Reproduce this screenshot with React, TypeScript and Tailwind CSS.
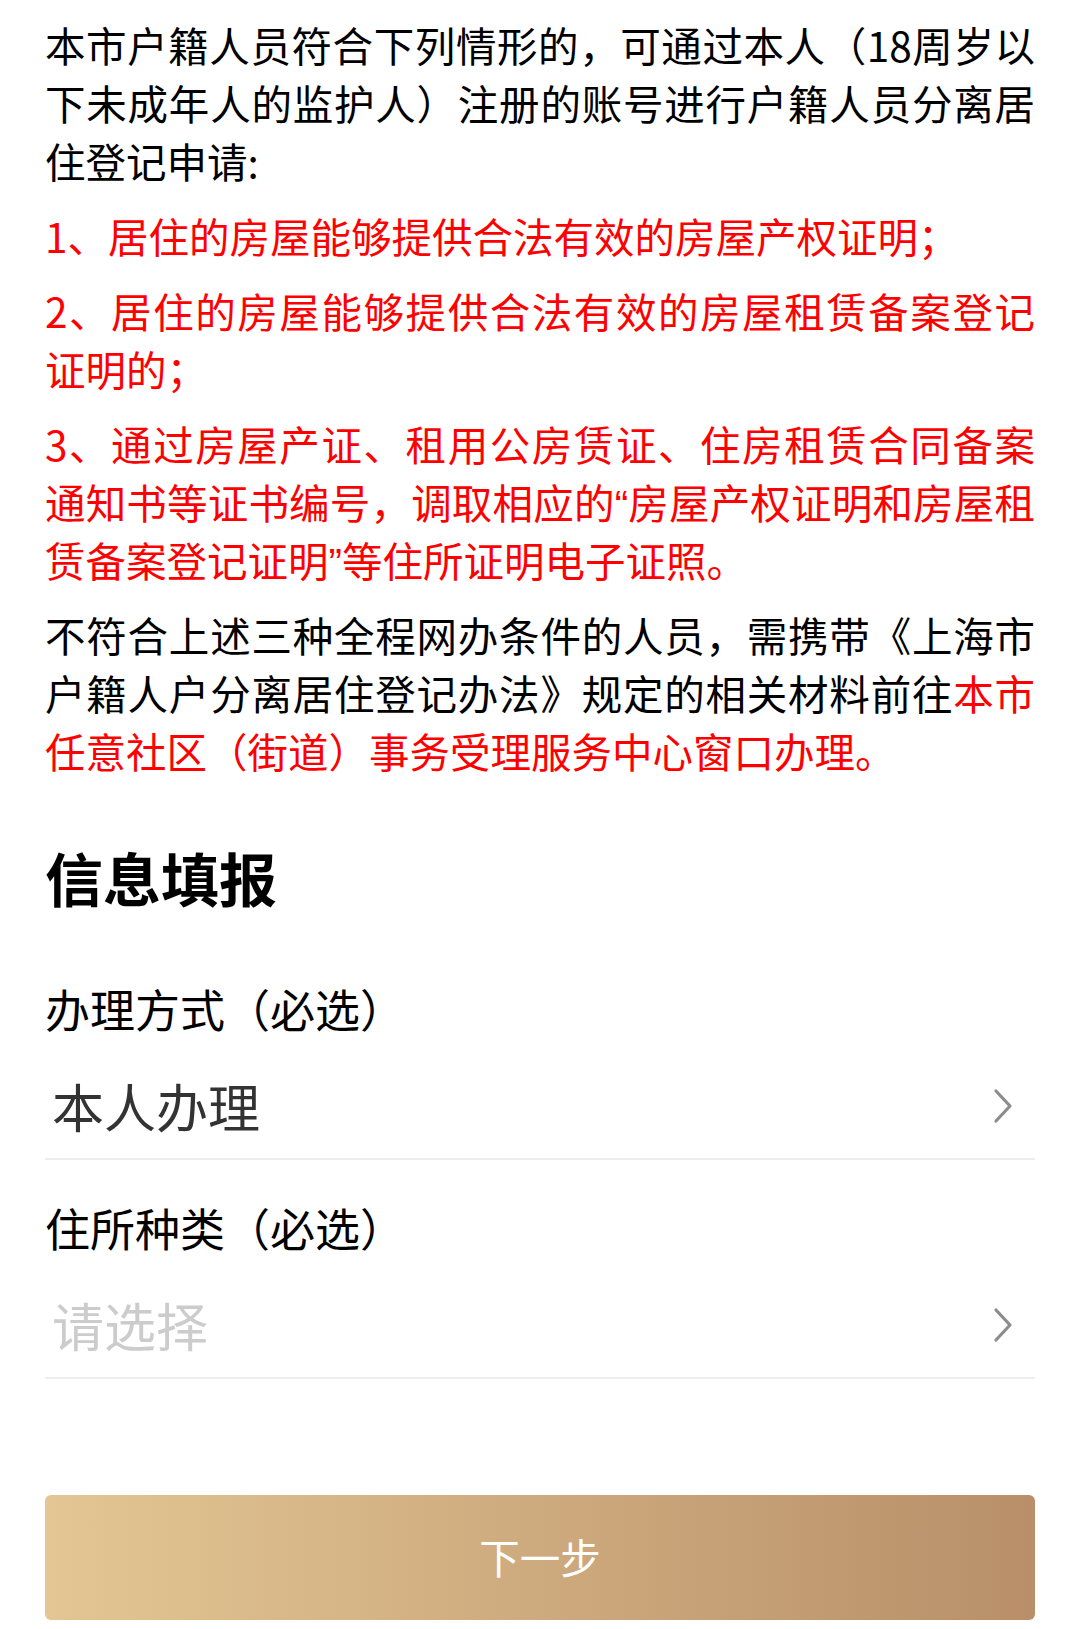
import React from "react";

const font = { fontFamily: '"Noto Sans CJK SC", "Noto Sans", sans-serif' };

function Chevron() {
  return (
    <svg width="20" height="36" viewBox="0 0 20 36" fill="none" className="shrink-0">
      <path
        d="M3 3 L17 18 L3 33"
        stroke="#8c8c8c"
        strokeWidth="3.2"
        strokeLinecap="round"
        strokeLinejoin="round"
      />
    </svg>
  );
}

function SelectRow({ value, placeholder }: { value?: string; placeholder: string }) {
  return (
    <div className="flex h-[120px] items-center justify-between border-b-2 border-[#eeeeee] pt-[14px]">
      <span
        className={`pl-[7px] text-[52px] leading-[72px] ${value ? "text-[#333333]" : "text-[#cccccc]"}`}
      >
        {value ?? placeholder}
      </span>
      <div className="mr-[22px]">
        <Chevron />
      </div>
    </div>
  );
}

// 窄引号，和原图一样不占全角
const Q = ({ children }: { children: string }) => (
  <span className="font-['Liberation_Sans',sans-serif] leading-none">{children}</span>
);

export default function App() {
  return (
    <div className="min-h-[1629px] w-full bg-white px-[45px]" style={font}>
      {/* 说明 */}
      <div className="pt-[16px] text-justify text-[40.5px] leading-[58px] text-black">
        <p>
          本市户籍人员符合下列情形的，可通过本人（18周岁以下未成年人的监护人）注册的账号进行户籍人员分离居住登记申请:
        </p>
        <p className="mt-[17px] text-[#ff0000]">1、居住的房屋能够提供合法有效的房屋产权证明；</p>
        <p className="mt-[17px] text-[#ff0000]">2、居住的房屋能够提供合法有效的房屋租赁备案登记证明的；</p>
        <p className="mt-[17px] text-[#ff0000]">
          3、通过房屋产证、租用公房赁证、住房租赁合同备案通知书等证书编号，调取相应的<Q>“</Q>房屋产权证明和房屋租赁备案登记证明<Q>”</Q>等住所证明电子证照。
        </p>
        <p className="mt-[17px]">
          不符合上述三种全程网办条件的人员，需携带《上海市户籍人户分离居住登记办法》规定的相关材料前往
          <span className="text-[#ff0000]">本市任意社区（街道）事务受理服务中心窗口办理。</span>
        </p>
      </div>

      {/* 信息填报 */}
      <h2 className="mt-[59px] text-[58px] font-bold leading-[76px] text-black">信息填报</h2>

      <div className="mt-[63px] text-[45px] leading-[62px] text-black">办理方式（必选）</div>
      <SelectRow value="本人办理" placeholder="请选择" />

      <div className="mt-[37px] text-[45px] leading-[62px] text-black">住所种类（必选）</div>
      <SelectRow placeholder="请选择" />

      <button className="mt-[116px] flex h-[125px] w-full items-center justify-center rounded-[6px] bg-linear-to-r from-[#e3c693] to-[#b88f69] text-[40.5px] text-white">
        下一步
      </button>
    </div>
  );
}
